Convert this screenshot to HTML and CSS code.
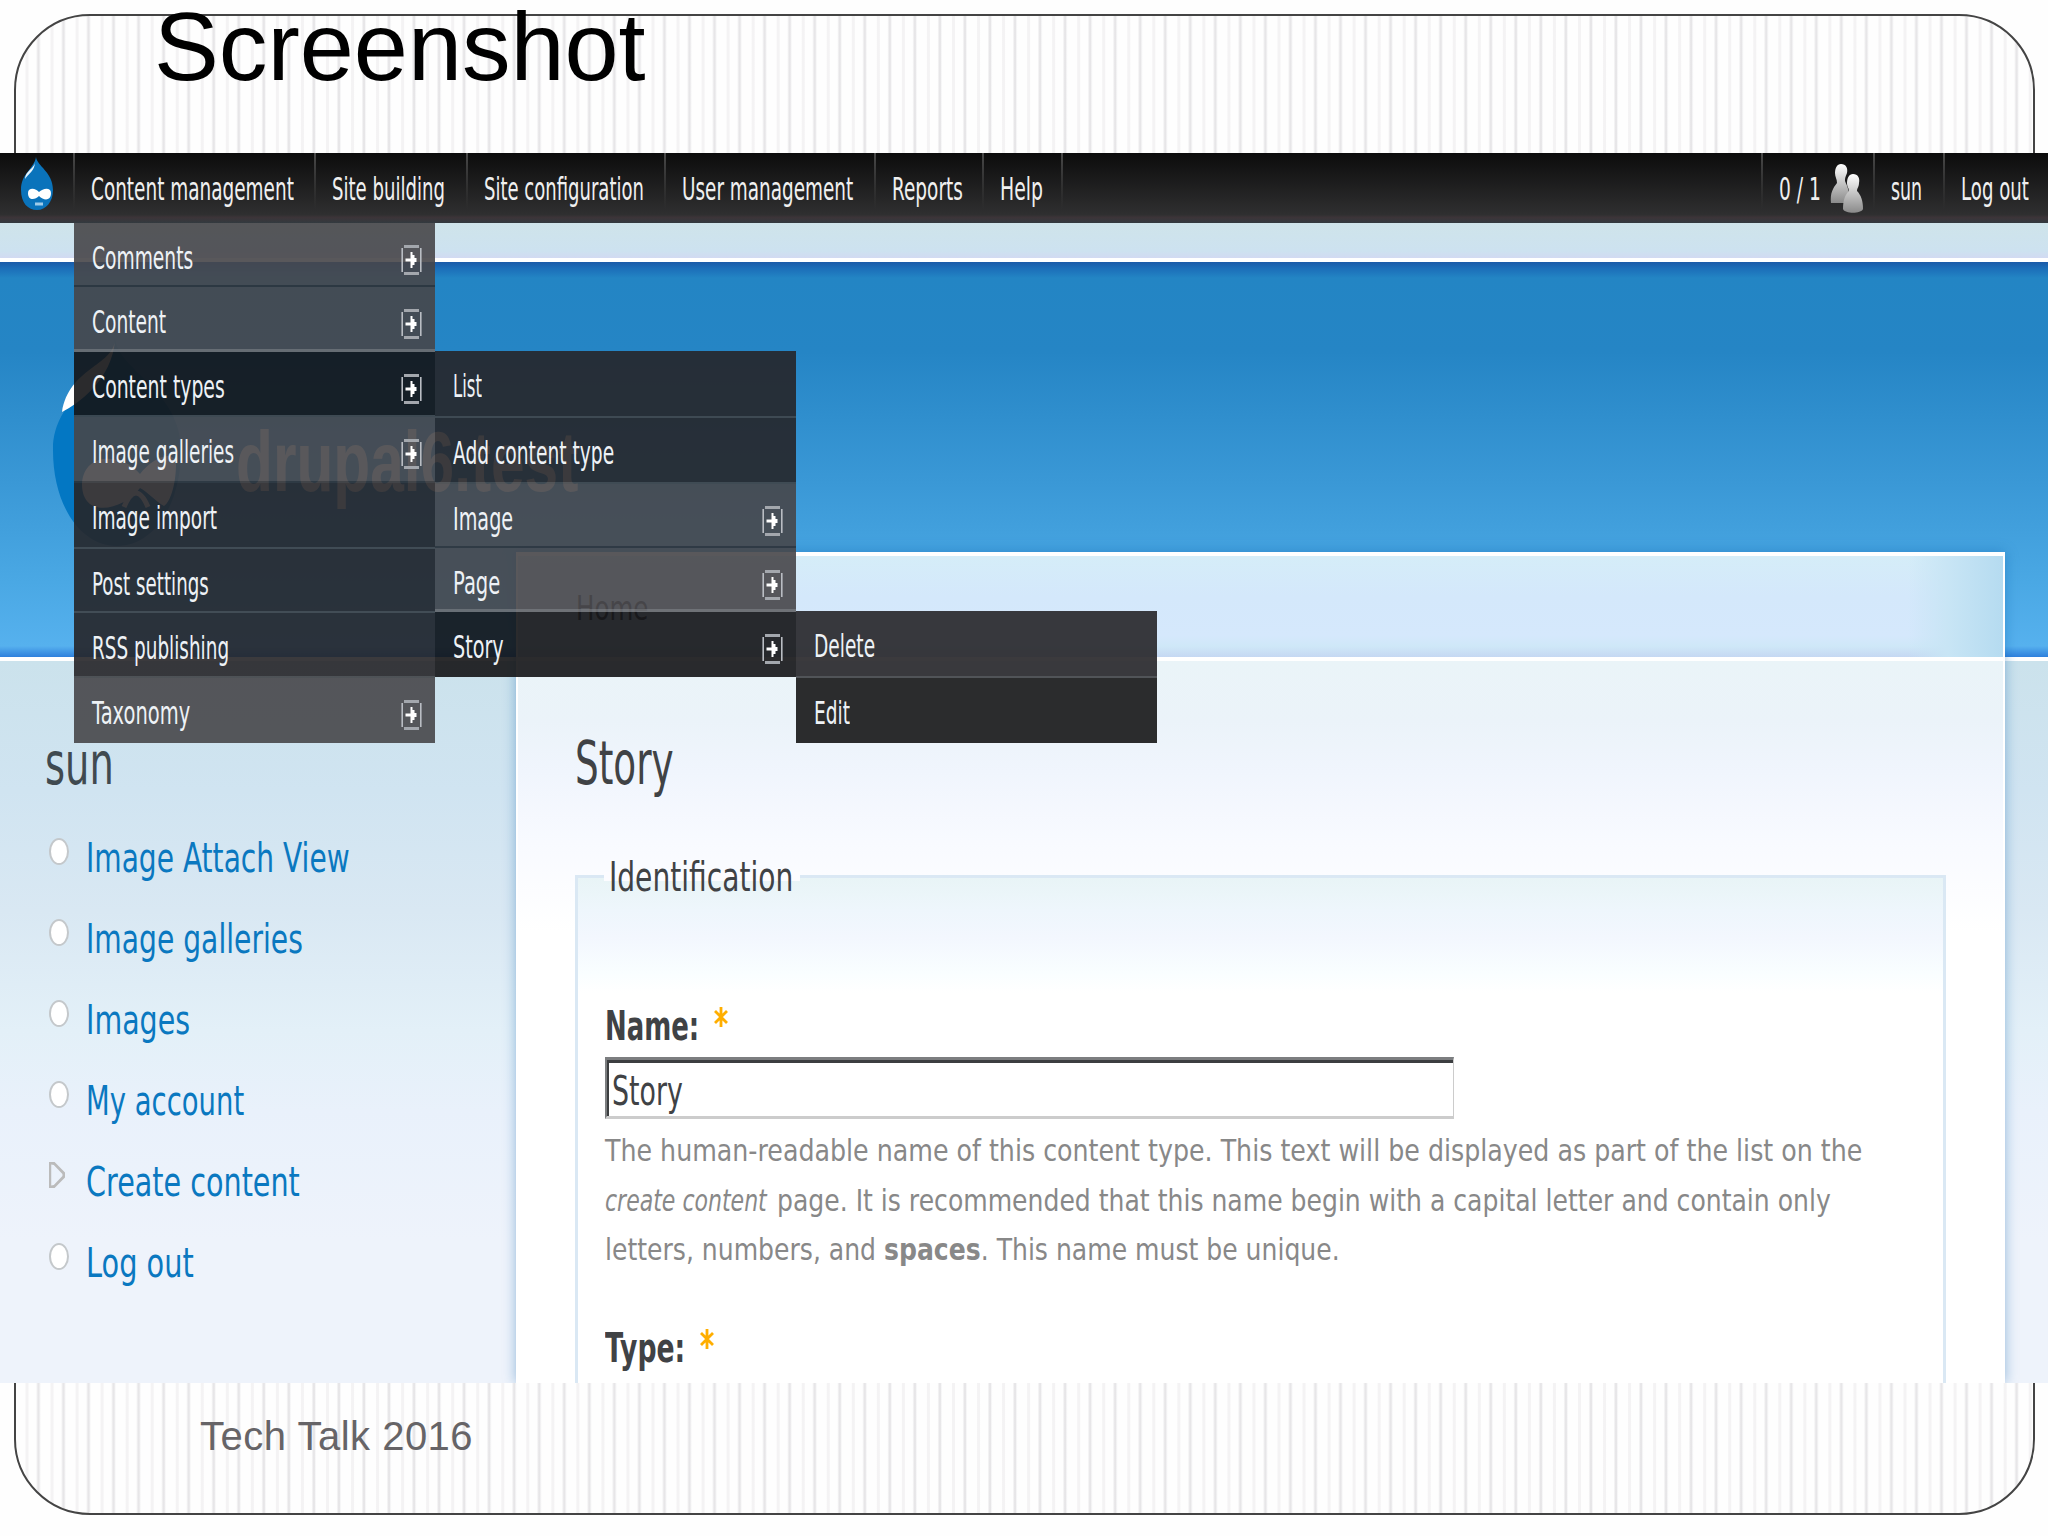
FILE: index.html
```html
<!DOCTYPE html>
<html lang="en">
<head>
  <meta charset="UTF-8" />
  <title>Screenshot</title>
  <link rel="stylesheet" href="styles.css">
</head>
<body>
  <svg width="0" height="0" class="defs">
    <symbol id="arrow" viewBox="0 0 21 30">
      <path d="M3 1.5h15M3 28.5h15" stroke="#a3a7ad" stroke-width="3"/>
      <path d="M1.2 3v24M19.8 3v24" stroke="#b9bdc3" stroke-width="1.6"/>
      <path d="M4.5 15h9" stroke="#fff" stroke-width="3"/>
      <path d="M9.500 7h2v3h2v3h2v4h-2v3h-2v3h-2z" fill="#fff"/>
    </symbol>
  </svg>

  <div class="frame">
    <h1 class="slide-title"><span data-w="492">Screenshot</span></h1>

    <div class="screen">
      <!-- Admin bar -->
      <div class="bar">
        <div class="cell home">
          <svg width="32" height="54" viewBox="0 0 32 54">
            <path d="M15 0c1 9 17 15 17 33 0 12-7 20-16 20S0 46 0 33C0 16 13 12 15 0z" fill="#0a73bb"/>
            <path d="M14 5c0 6-10 9-10 17 3-5 10-8 10-17z" fill="#e8f4fc"/>
            <path d="M7 36c0-6 8-5 11-1 4-4 12-5 12 1 0 8-7 8-12 3-4 4-11 5-11-3z" fill="#fff"/>
            <path d="M14 47h8" stroke="#9fcbe8" stroke-width="3"/>
          </svg>
        </div>
        <div class="cell c1"><span data-w="203">Content management</span></div>
        <div class="cell c2"><span data-w="113">Site building</span></div>
        <div class="cell c3"><span data-w="160">Site configuration</span></div>
        <div class="cell c4"><span data-w="171">User management</span></div>
        <div class="cell c5"><span data-w="71">Reports</span></div>
        <div class="cell c6"><span data-w="43">Help</span></div>
        <div class="cell c7"><span data-w="42">0 / 1</span>
          <svg class="people" width="34" height="50" viewBox="0 0 34 50">
            <defs>
              <linearGradient id="pg" x1="0" y1="0" x2="0" y2="1">
                <stop offset="0" stop-color="#fff"/><stop offset="1" stop-color="#8a8a8a"/>
              </linearGradient>
            </defs>
            <path d="M11 0c5 0 7 4 6 9-1 3-2 4-2 8 2 5 5 10 5 22H1c-1-10 2-15 6-20 0-4-2-6-2-10 0-5 2-9 6-9z" fill="url(#pg)"/>
            <path d="M23 10c5 0 7 4 6 9 0 4-2 5-2 8 4 4 6 10 6 18-2 5-18 5-20 0 0-9 2-14 6-18 0-3-2-4-2-8 0-5 2-9 6-9z" fill="url(#pg)"/>
          </svg>
        </div>
        <div class="cell c8"><span data-w="31">sun</span></div>
        <div class="cell c9"><span data-w="68">Log out</span></div>
      </div>

      <div class="site">
        <div class="side">
          <div class="brand">
            <svg width="128" height="210" viewBox="0 0 128 210">
              <path d="M62 0c2 32 66 52 66 112 0 56-28 96-64 96S0 168 0 112C0 56 58 44 62 0z" fill="#0377c3"/>
              <path d="M62 2c-2 26-46 28-53 72 16-8 50-32 53-72z" fill="#fff"/>
              <path d="M29 146c2-34 42-30 58-10 12-16 34-26 36-10 0 16-4 36-12 42-8-4-16-14-24-18-16 22-58 32-58-4z" fill="#fff"/>
              <path d="M71 169q12-28 24 0" fill="none" stroke="#fff" stroke-width="5"/>
            </svg>
            <span class="name" data-w="342">drupal6.test</span>
          </div>
          <h2><span data-w="69">sun</span></h2>
          <ul>
            <li><span data-w="264">Image Attach View</span></li>
            <li><span data-w="217">Image galleries</span></li>
            <li><span data-w="104">Images</span></li>
            <li><span data-w="158">My account</span></li>
            <li class="closed"><span data-w="214">Create content</span></li>
            <li><span data-w="108">Log out</span></li>
          </ul>
        </div>

        <div class="main">
          <div class="crumb"><span data-w="72">Home</span></div>
          <h2><span data-w="99">Story</span></h2>
          <div class="fieldset">
            <div class="legend"><span data-w="184">Identification</span></div>
            <div class="label"><span data-w="94">Name:</span><svg width="14" height="20" viewBox="0 0 14 20"><path d="M7 0v20M1 4l12 12M13 4L1 16" stroke="#ffae00" stroke-width="2.8"/></svg></div>
            <div class="input"><span data-w="71">Story</span></div>
            <div class="desc">
              <div><span data-w="1257">The human-readable name of this content type. This text will be displayed as part of the list on the</span></div>
              <div><span data-w="162"><i>create content</i></span><span class="rest" data-w="1054">page. It is recommended that this name begin with a capital letter and contain only</span></div>
              <div><span data-w="735">letters, numbers, and <b>spaces</b>. This name must be unique.</span></div>
            </div>
            <div class="label type"><span data-w="80">Type:</span><svg width="14" height="20" viewBox="0 0 14 20"><path d="M7 0v20M1 4l12 12M13 4L1 16" stroke="#ffae00" stroke-width="2.8"/></svg></div>
          </div>
        </div>
      </div>

      <!-- Dropdowns -->
      <div class="menu m1">
        <div class="item light h64"><span data-w="101">Comments</span><svg><use href="#arrow"/></svg></div>
        <div class="item light lit h65"><span data-w="74">Content</span><svg><use href="#arrow"/></svg></div>
        <div class="item active h65"><span data-w="133">Content types</span><svg><use href="#arrow"/></svg></div>
        <div class="item light h66"><span data-w="142">Image galleries</span><svg><use href="#arrow"/></svg></div>
        <div class="item h66"><span data-w="125">Image import</span></div>
        <div class="item h64"><span data-w="117">Post settings</span></div>
        <div class="item h65"><span data-w="137">RSS publishing</span></div>
        <div class="item light h65"><span data-w="98">Taxonomy</span><svg><use href="#arrow"/></svg></div>
      </div>
      <div class="menu m2">
        <div class="item h67"><span data-w="29">List</span></div>
        <div class="item h66"><span data-w="161">Add content type</span></div>
        <div class="item light h64"><span data-w="60">Image</span><svg><use href="#arrow"/></svg></div>
        <div class="item light lit h64"><span data-w="47">Page</span><svg><use href="#arrow"/></svg></div>
        <div class="item active h65"><span data-w="51">Story</span><svg><use href="#arrow"/></svg></div>
      </div>
      <div class="menu m3">
        <div class="item h67"><span data-w="61">Delete</span></div>
        <div class="item edit h65"><span data-w="36">Edit</span></div>
      </div>
    </div>

    <div class="footer">Tech Talk 2016</div>
  </div>

  <script>
    // squeeze every label to its column width
    for (const el of document.querySelectorAll("[data-w]")) {
      const w = Number(el.dataset.w);
      const natural = el.offsetWidth;
      el.style.transform = "scaleX(" + w / natural + ")";
      el.style.marginRight = (w - natural) + "px";
    }
  </script>
</body>
</html>
```
FILE: styles.css
```css
* {
  box-sizing: border-box;
}
body {
  margin: 0;
  width: 2048px;
  height: 1536px;
  overflow: hidden;
  background: #fefefe;
  font-family: "DejaVu Sans", sans-serif;
}
h1, h2, ul {
  margin: 0;
  padding: 0;
  font-weight: normal;
}
.defs {
  position: absolute;
}
[data-w] {
  display: inline-block;
  white-space: nowrap;
  transform-origin: 0 0;
}
.frame {
  width: 2021px;
  height: 1501px;
  margin: 14px 0 0 14px;
  border: 2px solid #444;
  border-radius: 76px;
  background: repeating-linear-gradient(90deg, #fefefe 0 9px, #f4f3f4 10px 12px, #fefefe 13px 20px, #e7e6e8 22px 23px, #f6f6f7 24px, #fefefe 25.04px);
}
.slide-title {
  height: 152px;
  margin-top: -15px;
  padding-left: 138px;
  font: 96px/92px "Liberation Sans", sans-serif;
  color: #000;
}
.screen {
  position: relative;
  width: 2048px;
  height: 1230px;
  margin-left: -16px;
  overflow: hidden;
}

/* admin bar */
.bar {
  display: flex;
  height: 70px;
  background: linear-gradient(#0c0c0c, #2f2f30 88%, #3c3438 92%, #333a3f);
  color: #f0f0f0;
  font-size: 32px;
  line-height: 72px;
}
.cell {
  position: relative;
  padding-left: 18px;
  white-space: nowrap;
  background: linear-gradient(#4a4a4a, #3a3a3a00) 0 0 / 2px 56px no-repeat;
}
.home {
  width: 73px;
  padding: 4px 0 0 21px;
  background: none;
  line-height: 0;
}
.c1 { width: 241px; }
.c2 { width: 152px; }
.c3 { width: 198px; }
.c4 { width: 210px; }
.c5 { width: 108px; }
.c6 { width: 81px; }
.cell.c7 {
  display: flex;
  width: 112px;
  margin-left: auto;
}
.c6::after {
  content: "";
  position: absolute;
  right: 0;
  width: 2px;
  height: 56px;
  background: linear-gradient(#4a4a4a, #3a3a3a00);
}
.c8 { width: 70px; }
.c9 { width: 105px; }
.people {
  margin: 11px 0 0 9px;
}

/* site */
.site {
  display: flex;
  height: 1160px;
  background:
    linear-gradient(#cfe4ea, #cde2f0 80%, #d2daf2) 0 0 / 100% 35px no-repeat,
    linear-gradient(#fff, #fff) 0 35px / 100% 4px no-repeat,
    linear-gradient(#1a5aa8, #1b6db8 6px, #2385c4 16px, #2585c5 90px, #3a98d6 220px, #4aa8e4 320px, #56b1ee 384px, #2f80dd 395px) 0 39px / 100% 395px no-repeat,
    linear-gradient(#fff, #fff) 0 434px / 100% 4px no-repeat,
    linear-gradient(#cbe2ec, #d0e4f1 130px, #d9e8f3 250px, #e3f0f8 370px, #e9f1fb 450px, #eef3fb 580px) 0 438px / 100% 722px no-repeat;
}
.side {
  width: 516px;
}
.brand {
  display: flex;
  height: 520px;
  padding: 115px 0 0 53px;
}
.brand > * {
  flex: none;
}
.name {
  margin: 68px 0 0 55px;
  height: 110px;
  font: bold 86px/110px "Liberation Sans", sans-serif;
  color: #fff;
}
.side h2 {
  height: 95px;
  padding-left: 45px;
  font-size: 58px;
  line-height: 42px;
  color: #404a50;
}
.side ul {
  list-style: none;
}
.side li {
  position: relative;
  height: 81px;
  padding-left: 86px;
  font-size: 40px;
  line-height: 40px;
  color: #0a78c0;
}
.side li::before {
  content: "";
  position: absolute;
  left: 49px;
  top: 0;
  width: 16px;
  height: 23px;
  border: 2px solid #c4c8cb;
  border-radius: 50%;
  background: #fff;
}
.side li.closed::before {
  height: 26px;
  border: 0;
  border-radius: 0;
  background: #bbb;
  clip-path: polygon(0 0, 35% 0, 100% 40%, 100% 60%, 35% 100%, 0 100%, 0 0, 14% 10%, 14% 90%, 30% 88%, 84% 54%, 84% 46%, 30% 12%, 14% 10%);
}
.main {
  width: 1489px;
  margin-top: 329px;
  border: solid #fff;
  border-width: 4px 2px 0;
  background:
    linear-gradient(90deg, #b9dcf100 1390px, #c8e5f5 1430px, #b5dbf0) 0 0 / 100% 101px no-repeat,
    linear-gradient(#d5edf8, #d4e8fb 40px, #d5e8fc 80px, #cfe8f8 90px, #c5d8f2) 0 0 / 100% 101px no-repeat,
    linear-gradient(#fff, #fff) 0 101px / 100% 4px no-repeat,
    linear-gradient(#eaf4f8, #ebf3f9 60px, #f0f5fd 110px, #f8faff 180px, #fff 270px) 0 105px;
  box-shadow: 0 0 12px rgba(10, 95, 170, .4);
  color: #404245;
}
.crumb {
  height: 101px;
  padding: 33px 0 0 58px;
  font-size: 33px;
  line-height: 40px;
}
.main h2 {
  height: 218px;
  padding: 76px 0 0 57px;
  font-size: 60px;
  line-height: 60px;
}
.fieldset {
  width: 1371px;
  height: 508px;
  margin-left: 57px;
  border: solid #dae8f4;
  border-width: 3px 3px 0;
  background: linear-gradient(#e8f4f6, #eef6fc 32px, #f3f7fe 60px, #f9feff 95px, #fff 115px);
}
.legend {
  width: 222px;
  height: 50px;
  margin: -29px 0 0 26px;
  padding-left: 5px;
  background: linear-gradient(#fcfcff, #fcfcff) 0 23px / 196px 9px no-repeat;
  font-size: 40px;
  line-height: 56px;
}
.label {
  display: flex;
  height: 60px;
  margin-left: 27px;
  font-size: 40px;
  line-height: 60px;
  font-weight: bold;
}
.label svg {
  margin: 11px 0 0 15px;
}
.legend + .label {
  margin-top: 97px;
}
.type {
  padding-top: 3px;
}
.input {
  width: 849px;
  height: 62px;
  margin: 1px 0 0 27px;
  padding-left: 5px;
  border: 1px solid #ccc;
  border-top: 3px solid #7c7e80;
  border-left: 2px solid #7c7e80;
  border-bottom: 3px solid #ccc;
  background: #fff;
  box-shadow: inset 2px 3px 0 #3c3e40;
  font-size: 40px;
  line-height: 62px;
}
.desc {
  height: 196px;
  padding: 7px 0 0 27px;
  font-size: 31px;
  line-height: 49.5px;
  color: #888;
}
.rest {
  margin-left: 10px;
}

/* dropdowns */
.menu {
  position: absolute;
  width: 361px;
  color: #eef2f6;
  font-size: 32px;
}
.m1 { left: 74px; top: 70px; }
.m2 { left: 435px; top: 198px; }
.m3 { left: 796px; top: 458px; }
.item {
  position: relative;
  padding-left: 18px;
  line-height: 71px;
  background: rgba(38, 37, 40, .9);
  border-bottom: 2px solid rgba(64, 66, 70, .9);
  background-clip: padding-box;
}
.item:last-child {
  border-bottom: 0;
}
.light {
  background-color: rgba(71, 70, 73, .9);
  border-bottom-color: rgba(45, 48, 52, .9);
}
.lit {
  border-bottom: 3px solid rgba(105, 108, 112, .95);
}
.active {
  background-color: rgba(20, 20, 22, .9);
}
.edit {
  background-color: rgba(40, 41, 42, .99);
}
.item svg {
  position: absolute;
  right: 13px;
  top: 22px;
  width: 21px;
  height: 30px;
}
.h64 { height: 64px; }
.h65 { height: 65px; }
.h66 { height: 66px; }
.h67 { height: 67px; }

.footer {
  padding: 29px 0 0 184px;
  font: 40px/48px "Liberation Sans", sans-serif;
  letter-spacing: .5px;
  color: #666467;
}
```
